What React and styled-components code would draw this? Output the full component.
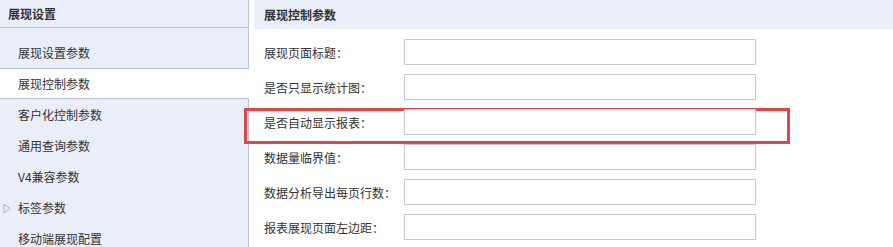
import React from 'react';
import styled, { createGlobalStyle } from 'styled-components';

const GlobalStyle = createGlobalStyle`
  html, body {
    margin: 0;
    padding: 0;
    background: #fff;
    font-family: "Noto Sans CJK SC", "Noto Sans", sans-serif;
    font-size: 12px;
    color: #333;
  }
`;

const Page = styled.div`
  display: flex;
  width: 893px;
  height: 247px;
  overflow: hidden;
`;

const Sidebar = styled.div`
  width: 248px;
  flex-shrink: 0;
  background: #eaeef8;
  border-right: 1px solid #b9c5d6;
  display: flex;
  flex-direction: column;
`;

const SideHeader = styled.div`
  height: 29px;
  line-height: 27px;
  padding-left: 8px;
  font-weight: bold;
  border-bottom: 1px solid #b9c5d6;
`;

const SideList = styled.div`
  padding-top: 9px;
  display: flex;
  flex-direction: column;
`;

const SideItem = styled.div`
  position: relative;
  height: 31px;
  line-height: 31px;
  padding-left: 18px;
  box-sizing: border-box;
  ${p => p.$active && `
    background: #fff;
    margin-right: -1px;
    border-top: 1px solid #b9c5d6;
    border-bottom: 1px solid #b9c5d6;
    line-height: 29px;
  `}
`;

const Arrow = styled.svg`
  position: absolute;
  left: 3px;
  top: 11px;
`;

const Main = styled.div`
  flex: 1;
  padding-left: 5px;
  display: flex;
  flex-direction: column;
`;

const MainHeader = styled.div`
  height: 29px;
  line-height: 30px;
  padding-left: 10px;
  background: #eaeef8;
  font-weight: bold;
`;

const Form = styled.div`
  display: flex;
  flex-direction: column;
  gap: 9px;
  padding-top: 10px;
  padding-left: 10px;
`;

const Row = styled.div`
  display: flex;
  align-items: center;
  height: 26px;
`;

const Highlight = styled.div`
  box-sizing: border-box;
  width: 546px;
  height: 36px;
  margin: -1px 0 -9px -20px;
  padding-left: 17px;
  border: 3px solid #e0464a;

  ${Row} {
    margin-top: -2px;
  }
`;

const Label = styled.div`
  width: 140px;
  flex-shrink: 0;
`;

const Input = styled.div`
  width: 350px;
  height: 24px;
  border: 1px solid #c9c9c9;
  background: #fff;
`;

const sideItems = ['展现设置参数', '展现控制参数', '客户化控制参数', '通用查询参数', 'V4兼容参数', '标签参数', '移动端展现配置'];
const fields = ['展现页面标题：', '是否只显示统计图：', '是否自动显示报表：', '数据量临界值：', '数据分析导出每页行数：', '报表展现页面左边距：'];

export default function App() {
  return (
    <Page>
      <GlobalStyle />
      <Sidebar>
        <SideHeader>展现设置</SideHeader>
        <SideList>
          {sideItems.map(t => (
            <SideItem key={t} $active={t === '展现控制参数'}>
              {t === '标签参数' && (
                <Arrow width="8" height="11" viewBox="0 0 8 11">
                  <path d="M1 1 L7 5.5 L1 10 Z" fill="none" stroke="#b0b0b0" strokeWidth="1" />
                </Arrow>
              )}
              {t}
            </SideItem>
          ))}
        </SideList>
      </Sidebar>
      <Main>
        <MainHeader>展现控制参数</MainHeader>
        <Form>
          {fields.map(f => {
            const row = (
              <Row key={f}>
                <Label>{f}</Label>
                <Input />
              </Row>
            );
            return f === '是否自动显示报表：' ? <Highlight key={f}>{row}</Highlight> : row;
          })}
        </Form>
      </Main>
    </Page>
  );
}
